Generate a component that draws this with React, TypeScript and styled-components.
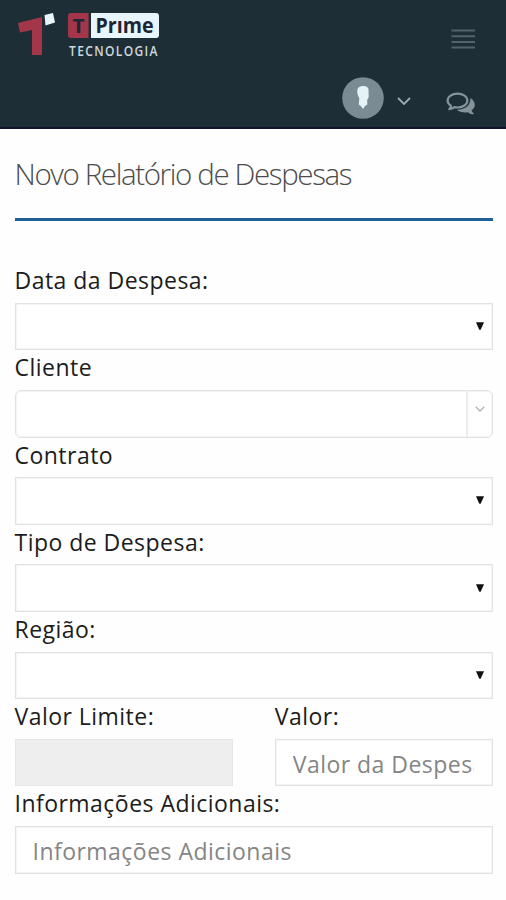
import React from 'react';
import styled, { createGlobalStyle, css } from 'styled-components';

const GlobalStyle = createGlobalStyle`
  *, *::before, *::after { box-sizing: border-box; }
  body { margin: 0; background: #fefefe; }
`;

const Page = styled.div`
  min-height: 900px;
  overflow: hidden;
  background: #fefefe;
  color: #1c1c1c;
  font-family: 'Open Sans', sans-serif;
`;

const Header = styled.header`
  height: 129px;
  padding: 0 31px 0 16px;
  background: #1e2e36;
  border-bottom: 2px solid #14122a;
`;

const BrandRow = styled.div`
  display: flex;
  height: 73px;
  justify-content: space-between;
  align-items: flex-start;
`;

const Logo = styled.svg`
  display: block;
  width: 148px;
  height: 52px;
  margin-top: 8px;
`;

const IconButton = styled.button`
  display: flex;
  padding: 0;
  border: 0;
  background: none;
`;

const MenuButton = styled(IconButton)`
  margin-top: 28px;
`;

const UserRow = styled.div`
  display: flex;
  height: 50px;
  justify-content: flex-end;
  align-items: center;
`;

const Chevron = styled(IconButton)`
  margin: 6px 35px 0 13px;
`;

const Chat = styled(IconButton)`
  margin-top: 13px;
`;

const Main = styled.main`
  padding: 0 13px 0 14.5px;
`;

const Title = styled.h1`
  height: 92px;
  margin: 0 0 42.2px;
  padding-top: 25px;
  border-bottom: 3px solid #1d6096;
  color: #4c4c4c;
  font-size: 29.5px;
  font-weight: 300;
  line-height: 40px;
  letter-spacing: -1.38px;
  white-space: nowrap;
`;

const Form = styled.form`
  display: grid;
  grid-template-columns: 1fr 1fr;
  column-gap: 42px;
`;

const Field = styled.div<{ $wide?: boolean }>`
  grid-column: ${({ $wide }) => ($wide ? '1 / -1' : 'auto')};
  min-width: 0;
`;

const Label = styled.label`
  display: block;
  height: 39.6px;
  font-size: 23px;
  line-height: 34.4px;
  letter-spacing: 0.47px;
  white-space: nowrap;
`;

const box = css`
  width: 100%;
  height: 47.6px;
  border: 1px solid #e2e2e2;
  background: #fff;
  box-shadow: inset 0 0 0 1px #f4f4f4;
`;

const SelectBox = styled.div`
  ${box}
  display: flex;
  align-items: center;
  justify-content: flex-end;
  padding: 0 8px 1px 0;
`;

const ComboBox = styled.div`
  ${box}
  display: flex;
  justify-content: flex-end;
  border-radius: 6px;
`;

const ComboToggle = styled.div`
  display: flex;
  width: 26px;
  justify-content: center;
  padding-top: 15px;
  border-left: 2px solid #ececec;
`;

const Input = styled.input`
  ${box}
  display: block;
  padding: 2px 18px 0 17px;
  border-radius: 0;
  outline: 0;
  font-family: inherit;
  font-size: 23px;
  letter-spacing: 0.47px;

  &::placeholder { color: #858585; opacity: 1; }
  &:disabled { background: #eee; border-color: #e6e6e6; box-shadow: none; }
`;

const BrandLogo = () => (
  <Logo viewBox="16 8 148 52" role="img" aria-label="T Prime Tecnologia">
    <path d="M18 23 42 17V55H32V30L20 32.500Z" fill="#a33649" />
    <path d="m44.500 15 8.500-2 2 9.500-9.500 3Z" fill="#e8f5fb" />
    <path d="M71 13h17.500v25H71q-3 0-3-3V16q0-3 3-3Z" fill="#a33649" />
    <path d="M91 13h65q3 0 3 3v19q0 3-3 3H91Z" fill="#e8f5fb" />
    <text x="72.500" y="32.500" fontFamily="Open Sans" fontSize="20" fontWeight="700" fill="#1e2534" textLength="12" lengthAdjust="spacingAndGlyphs">T</text>
    <text x="95.500" y="32.500" fontFamily="Open Sans" fontSize="20.500" fontWeight="700" fill="#1c2634" textLength="58" lengthAdjust="spacingAndGlyphs">Prıme</text>
    <text transform="translate(69 55.700) scale(.86 1)" fontFamily="Open Sans" fontSize="14" fontWeight="600" fill="#cbd7dd" textLength="103">TECNOLOGIA</text>
  </Logo>
);

const MenuIcon = () => (
  <svg width="24" height="22" viewBox="0 0 24 22" fill="none" stroke="#53636b" strokeWidth="2">
    <path d="M.5 2.500H24M.5 8.200H24M.5 13.900H24M.5 19.600H24" />
  </svg>
);

const Avatar = () => (
  <svg width="42" height="42" viewBox="0 0 42 42">
    <circle cx="21" cy="21" r="20.800" fill="#7b8b93" />
    <path d="M16 11q2-2.500 5.500-2 4 0 5 3l.2 8-1.500 3 .1 4.500-2.300 1.500-2 3-2.200-3-2-1.500.5-6-1.300-3Q14.500 14 16 11Z" fill="#e5f2f6" />
  </svg>
);

const ChatIcon = () => (
  <svg width="29" height="25" viewBox="0 0 29 25">
    <path d="M24.500 6C28 8.500 29.300 11.200 28.600 14.200c-.4 1.700-1.600 3-3 4 .3 1.300 1.100 2.300 2.200 3.300-.2 1.800-3.800.5-6-1.200-4.200.7-8.700-.1-10.800-2.500C20 17.500 24.500 13 24.500 6Z" fill="#84939a" />
    <path d="M11.500 1.600C6 1.600 1.600 4.700 1.600 8.600c0 2.200 1.300 4.100 3.500 5.300-.2 1.500-1 2.500-1.800 3.300 2.200-.2 3.900-1 5.200-2.100 1 .3 2 .4 3 .4 5.500 0 9.900-3.100 9.900-6.900s-4.400-7-9.900-7Z" fill="#1e2e36" stroke="#84939a" strokeWidth="2.200" strokeLinejoin="round" />
  </svg>
);

const DownIcon = ({ width, color }: { width: number; color: string }) => (
  <svg width={width} height={width * 0.6} viewBox="0 0 14 8.400" fill="none" stroke={color} strokeWidth="1.800">
    <path d="m1 1 6 6 6-6" />
  </svg>
);

const Select = () => (
  <SelectBox role="combobox" aria-expanded="false">
    <svg width="8" height="8" viewBox="0 0 8 8"><path d="M0 .300h8L4.700 7.800H3.300Z" fill="#111" /></svg>
  </SelectBox>
);

const SelectField = ({ label }: { label: string }) => (
  <Field $wide>
    <Label>{label}</Label>
    <Select />
  </Field>
);

export default function App() {
  return (
    <Page>
      <GlobalStyle />
      <Header>
        <BrandRow>
          <BrandLogo />
          <MenuButton aria-label="Menu"><MenuIcon /></MenuButton>
        </BrandRow>
        <UserRow>
          <Avatar />
          <Chevron aria-label="Conta"><DownIcon width={14} color="#9caab1" /></Chevron>
          <Chat aria-label="Mensagens"><ChatIcon /></Chat>
        </UserRow>
      </Header>
      <Main>
        <Title>Novo Relatório de Despesas</Title>
        <Form>
          <SelectField label="Data da Despesa:" />
          <Field $wide>
            <Label>Cliente</Label>
            <ComboBox role="combobox" aria-expanded="false">
              <ComboToggle><DownIcon width={10} color="#b2b2b2" /></ComboToggle>
            </ComboBox>
          </Field>
          <SelectField label="Contrato" />
          <SelectField label="Tipo de Despesa:" />
          <SelectField label="Região:" />
          <Field>
            <Label htmlFor="limite">Valor Limite:</Label>
            <Input id="limite" disabled />
          </Field>
          <Field>
            <Label htmlFor="valor">Valor:</Label>
            <Input id="valor" placeholder="Valor da Despesa" />
          </Field>
          <Field $wide>
            <Label htmlFor="info">Informações Adicionais:</Label>
            <Input id="info" placeholder="Informações Adicionais" />
          </Field>
        </Form>
      </Main>
    </Page>
  );
}
